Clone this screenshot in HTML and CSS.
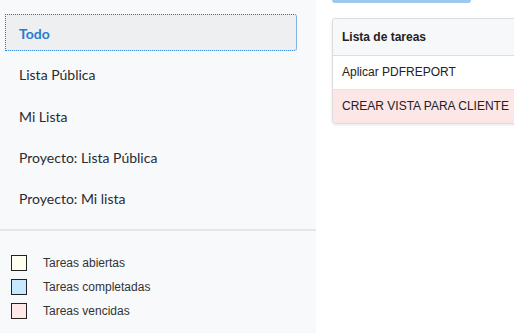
FILE: index.html
```html
<!DOCTYPE html>
<html>
<head>
<meta charset="utf-8">
<link rel="stylesheet" href="styles.css">
</head>
<body>
<div class="page">
  <aside class="sidebar">
    <nav class="menu">
      <a class="item active">Todo</a>
      <a class="item">Lista Pública</a>
      <a class="item">Mi Lista</a>
      <a class="item">Proyecto: Lista Pública</a>
      <a class="item">Proyecto: Mi lista</a>
    </nav>
    <div class="legend">
      <div class="leg"><span class="sw open"></span>Tareas abiertas</div>
      <div class="leg"><span class="sw done"></span>Tareas completadas</div>
      <div class="leg"><span class="sw late"></span>Tareas vencidas</div>
    </div>
  </aside>
  <main class="main">
    <div class="btn"></div>
    <div class="card">
      <div class="head">Lista de tareas</div>
      <div class="row">Aplicar PDFREPORT</div>
      <div class="row late">CREAR VISTA PARA CLIENTE</div>
    </div>
  </main>
</div>
</body>
</html>
```
FILE: styles.css
```css
html, body { margin: 0; padding: 0; background: #fff; }
.page { display: flex; width: 514px; height: 333px; overflow: hidden; }
.sidebar {
  width: 316px; flex: none; background: #f8f9fb;
  display: flex; flex-direction: column;
}
.menu {
  padding: 14px 19px 13px 5px;
  border-bottom: 2px solid #e3e6eb;
  display: flex; flex-direction: column;
}
.item {
  display: block; height: 37px; line-height: 35px; padding-top: 2px;
  padding-left: 14px; margin-bottom: 4.25px;
  font-family: Lato, sans-serif; font-size: 14px; color: #272b33;
  box-sizing: border-box;
}
.item:last-child { margin-bottom: 0; }
.item.active {
  background: #eeeff1; color: #2a7ad0; font-weight: bold;
  border: 1px dotted #1a7ad6; line-height: 33px; padding-top: 2px; padding-left: 13px;
  border-radius: 0 3px 3px 0;
}
.legend { padding: 24px 0 0 11px; display: flex; flex-direction: column; gap: 8px; }
.leg {
  display: flex; align-items: center; height: 16px;
  font-family: "Liberation Sans", Arial, sans-serif; font-size: 12px; color: #333;
}
.sw { width: 14px; height: 14px; border: 1px solid #222; margin-right: 16px; flex: none; }
.sw.open { background: #fffff0; }
.sw.done { background: #c6e9ff; }
.sw.late { background: #ffe8e8; }
.main { flex: 1; padding-left: 16px; }
.btn {
  width: 139px; height: 3px; background: #9ec8ee;
  border-radius: 0 0 5px 5px;
}
.card {
  margin-top: 15px; border: 1px solid #dcdcdc; border-right: none;
  border-radius: 4px 0 0 4px; overflow: hidden;
  box-shadow: 0 1px 3px rgba(0,0,0,0.1);
  font-family: "Liberation Sans", Arial, sans-serif; font-size: 12px; color: #222;
  width: 200px;
}
.head {
  height: 36px; line-height: 36px; padding-left: 9px; font-weight: bold;
  background: #f7f8fa; border-bottom: 1px solid #dedede;
}
.row {
  height: 33px; line-height: 33px; padding-left: 9px; white-space: nowrap;
  border-bottom: 1px solid #e4e4e4; background: #fff;
}
.row:last-child { border-bottom: none; }
.row.late { background: #fde6e6; }
```
